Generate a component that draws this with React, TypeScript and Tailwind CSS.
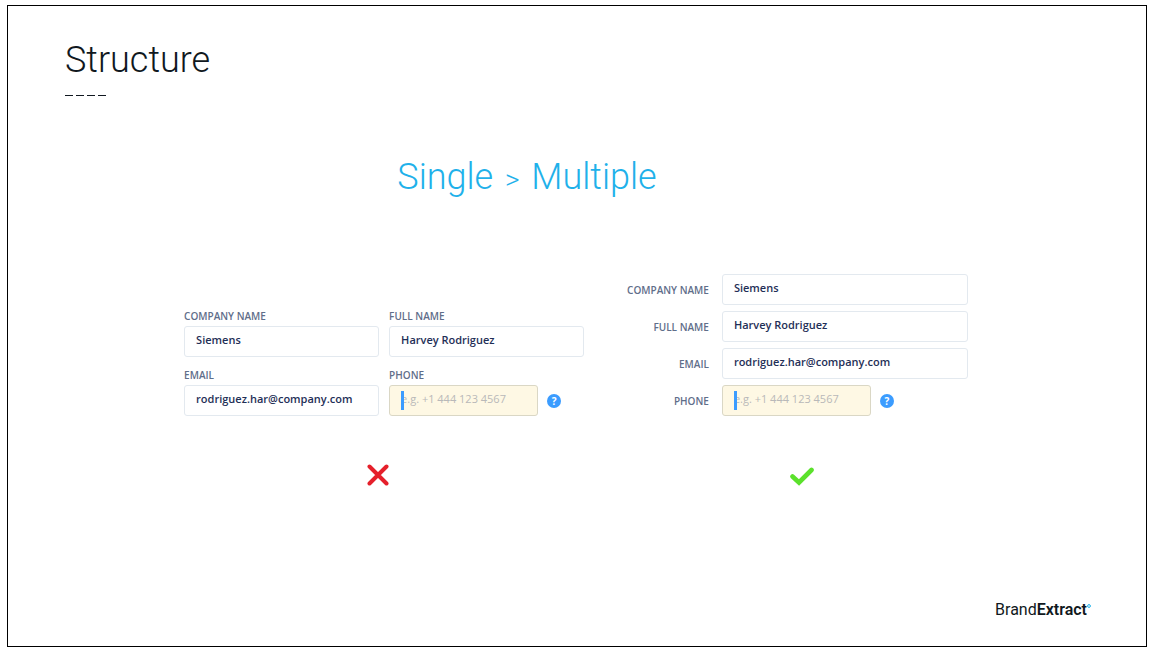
import React, { useState } from "react";

const inputClass =
  "h-[31px] w-full rounded-[3px] border border-[#e3e9ef] bg-white px-[11px] pb-1 text-[11px] font-semibold text-[#1f2f57] outline-none";

interface FieldProps {
  id: string;
  value: string;
}

const TextField = ({ id, value }: FieldProps) => {
  const [text, setText] = useState(value);

  return (
    <input
      id={id}
      type="text"
      value={text}
      onChange={(e) => setText(e.target.value)}
      className={inputClass}
    />
  );
};

const PhoneField = ({ id }: { id: string }) => {
  return (
    <div className="flex items-center gap-[9px]">
      <div className="relative w-[149px]">
        <input
          id={id}
          type="tel"
          placeholder="e.g. +1 444 123 4567"
          className="h-[31px] w-full rounded-[3px] border border-[#dad7c5] bg-[#fef8e4] px-[11px] pb-1 text-[11px] text-[#1f2f57] outline-none placeholder:text-[#b9b9b9]"
        />
        {/* text cursor */}
        <span className="absolute left-3 top-[6px] h-[19px] w-[3px] bg-[#3b9cff]" />
      </div>
      <button
        type="button"
        aria-label="Phone help"
        className="flex h-[14px] w-[14px] items-center justify-center rounded-full bg-[#3b9cff] text-[10px] font-bold leading-none text-white"
      >
        ?
      </button>
    </div>
  );
};

const Label = ({ id, children }: { id: string; children: string }) => {
  return (
    <label
      htmlFor={id}
      className="text-[10px] leading-4 font-semibold whitespace-nowrap text-[#5f6e8a]"
    >
      {children}
    </label>
  );
};

const App = () => {
  return (
    <div className="flex min-h-screen flex-col bg-white pt-[5px] pr-[9px] pb-2 pl-[7px] font-['Open_Sans',sans-serif]">
      <main className="flex flex-1 flex-col border border-black">
        <header className="px-[57px] pt-[34px]">
          <h1 className="font-['Roboto',sans-serif] text-[36px] leading-10 font-light text-[#101820]">
            Structure
          </h1>
          <div className="mt-[15px] flex gap-[3px]">
            <span className="h-px w-2 bg-[#101820]" />
            <span className="h-px w-2 bg-[#101820]" />
            <span className="h-px w-2 bg-[#101820]" />
            <span className="h-px w-2 bg-[#101820]" />
          </div>
        </header>

        <h2 className="mt-[61px] pr-[100px] text-center font-['Roboto',sans-serif] text-[36px] leading-10 font-light text-[#1fb1ea]">
          Single <span className="mx-[3px] text-[28px]">&gt;</span> Multiple
        </h2>

        <div className="mt-[74px] flex items-end justify-center gap-[43px] pr-[2px]">
          {/* Two columns */}
          <section>
            <form className="grid w-[400px] grid-cols-2 gap-x-[10px] gap-y-[10px]">
              <div className="flex flex-col gap-[2px]">
                <Label id="company-a">COMPANY NAME</Label>
                <TextField id="company-a" value="Siemens" />
              </div>
              <div className="flex flex-col gap-[2px]">
                <Label id="name-a">FULL NAME</Label>
                <TextField id="name-a" value="Harvey Rodriguez" />
              </div>
              <div className="flex flex-col gap-[2px]">
                <Label id="email-a">EMAIL</Label>
                <TextField id="email-a" value="rodriguez.har@company.com" />
              </div>
              <div className="flex flex-col gap-[2px]">
                <Label id="phone-a">PHONE</Label>
                <PhoneField id="phone-a" />
              </div>
            </form>
            <div className="mt-12 flex justify-center pr-3">
              <svg width="22" height="22" viewBox="0 0 22 22">
                <path
                  d="M2.5 2.5L19.5 19.5M19.5 2.5L2.5 19.5"
                  stroke="#e5202b"
                  strokeWidth="4"
                  strokeLinecap="round"
                />
              </svg>
            </div>
          </section>

          {/* One column */}
          <section>
            <form className="grid grid-cols-[auto_246px] items-center gap-x-[13px] gap-y-[6px] text-right">
              <Label id="company-b">COMPANY NAME</Label>
              <TextField id="company-b" value="Siemens" />
              <Label id="name-b">FULL NAME</Label>
              <TextField id="name-b" value="Harvey Rodriguez" />
              <Label id="email-b">EMAIL</Label>
              <TextField id="email-b" value="rodriguez.har@company.com" />
              <Label id="phone-b">PHONE</Label>
              <PhoneField id="phone-b" />
            </form>
            <div className="mt-12 flex justify-center pl-2">
              <svg width="24" height="22" viewBox="0 0 24 22" fill="none">
                <path
                  d="M2.5 12.5L9 18.5L21.5 6"
                  stroke="#5be12c"
                  strokeWidth="4.6"
                  strokeLinecap="round"
                />
              </svg>
            </div>
          </section>
        </div>

        <footer className="mt-auto flex justify-end pr-[55px] pb-[26px]">
          <p className="flex font-['Roboto',sans-serif] text-[16px] leading-5 text-[#101820]">
            Brand<span className="font-semibold">Extract</span>
            <svg className="mt-1" width="4" height="4" viewBox="0 0 4 4" fill="none">
              <circle cx="2" cy="2" r="1.4" stroke="#1fb1ea" />
            </svg>
          </p>
        </footer>
      </main>
    </div>
  );
};

export default App;
